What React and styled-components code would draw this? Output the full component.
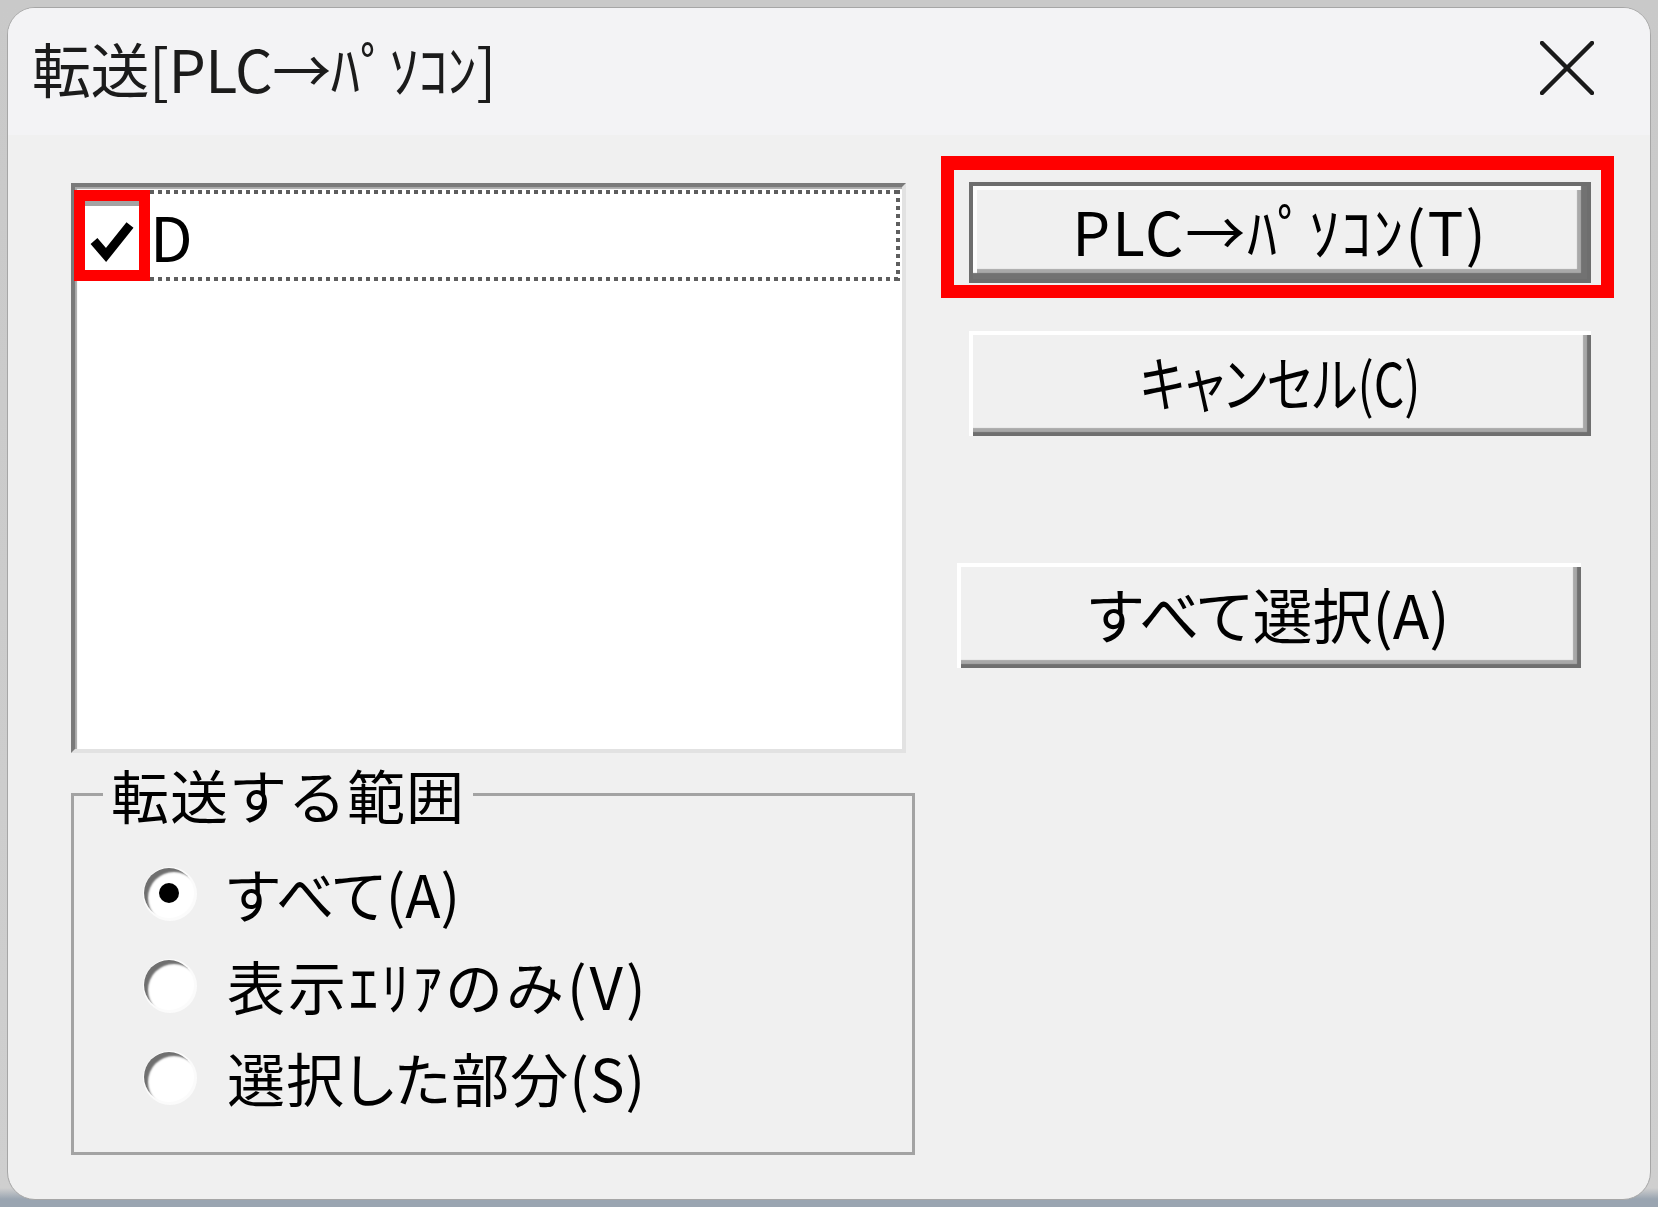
import React from 'react';
import styled, { createGlobalStyle } from 'styled-components';

const UI_FONT = '"Noto Sans CJK JP", "Noto Sans", sans-serif';

const GlobalStyle = createGlobalStyle`
  html, body {
    margin: 0;
    padding: 0;
  }
  body {
    width: 1658px;
    height: 1207px;
    overflow: hidden;
    background: linear-gradient(to bottom, #c9c9c9 0, #cfcfcf 1188px, #9aa5b1 1199px);
    font-family: ${UI_FONT};
  }
`;

const Window = styled.div`
  box-sizing: border-box;
  margin: 7px 0 0 7px;
  width: 1644px;
  height: 1193px;
  border: 1px solid #a6a6a6;
  border-radius: 28px;
  overflow: hidden;
  background: #f0f0f0;
  display: flex;
  flex-direction: column;
`;

const TitleBar = styled.div`
  box-sizing: border-box;
  flex: none;
  height: 127px;
  display: flex;
  align-items: center;
  justify-content: space-between;
  padding: 0 56px 8px 24px;
  background: #f3f3f5;
`;

const Title = styled.div`
  font-size: 59px;
  line-height: 1;
  color: #1b1b1b;
  letter-spacing: -0.5px;
`;

const CloseIcon = () => (
  <svg width="54" height="54" viewBox="0 0 54 54">
    <g stroke="#1a1a1a" strokeWidth="4.5" strokeLinecap="round">
      <line x1="2" y1="2" x2="52" y2="52" />
      <line x1="52" y1="2" x2="2" y2="52" />
    </g>
  </svg>
);

const Content = styled.div`
  flex: 1;
  display: flex;
  align-items: flex-start;
  padding: 21px 0 0 63px;
`;

const LeftColumn = styled.div`
  width: 844px;
  display: flex;
  flex-direction: column;
`;

const ListBox = styled.div`
  box-sizing: border-box;
  margin-top: 27px;
  width: 835px;
  height: 570px;
  background: #fff;
  border-style: solid;
  border-width: 4px;
  border-color: #7a7a7a #e2e2e2 #e2e2e2 #7a7a7a;
  box-shadow: inset 2px 2px 1px #a8a8a8;
  padding: 3px 2px 0 0;
`;

const ItemRow = styled.div`
  display: flex;
  height: 91px;
  margin-left: -1px;
`;

const CheckFrame = styled.div`
  box-sizing: border-box;
  flex: none;
  width: 76px;
  border: 11px solid #ff0000;
  background: #fff;
  display: flex;
`;

const CheckBox = styled.div`
  flex: 1;
  border-top: 5px solid #a3a3a3;
  display: flex;
  align-items: center;
  padding-left: 4px;
  padding-top: 4px;
`;

const CheckMark = () => (
  <svg width="46" height="46" viewBox="0 0 46 46">
    <polyline
      points="5,24 17,38 41,8"
      fill="none"
      stroke="#000"
      strokeWidth="9"
      strokeLinejoin="miter"
    />
  </svg>
);

const dots = '#5e5e5e 0 4px, transparent 4px 8px';

const ItemLabel = styled.div`
  flex: 1;
  display: flex;
  align-items: center;
  font-size: 62px;
  line-height: 1;
  color: #000;
  padding-bottom: 2px;
  background:
    repeating-linear-gradient(90deg, ${dots}) top left / 100% 4px no-repeat,
    repeating-linear-gradient(90deg, ${dots}) bottom left / 100% 4px no-repeat,
    repeating-linear-gradient(180deg, ${dots}) top right / 4px 100% no-repeat,
    #fff;
`;

const GroupBox = styled.fieldset`
  box-sizing: border-box;
  margin: 9px 0 0 0;
  width: 844px;
  min-width: 0;
  border: 3px solid #a3a3a3;
  padding: 0 0 29px 29px;
`;

const Legend = styled.legend`
  padding: 0 8px;
  font-size: 58px;
  line-height: 64px;
  color: #000;
  letter-spacing: 1px;
`;

const RadioList = styled.div`
  margin: 21px 0 0 41px;
  display: flex;
  flex-direction: column;
`;

const RadioRow = styled.label`
  height: 92px;
  display: flex;
  align-items: center;
  gap: 33px;
  font-size: 58px;
  color: #000;
  font-feature-settings: ${p => (p.$palt ? '"palt"' : 'normal')};
  letter-spacing: ${p => p.$spacing || 0}px;
`;

const RadioCircle = styled.span`
  flex: none;
  width: 50px;
  height: 50px;
  border-radius: 50%;
  background: #fff;
  box-shadow: inset 5px 5px 2px -1px #6f6f6f, 1px 1px 0 2px #fbfbfb;
  display: flex;
  align-items: center;
  justify-content: center;

  &::after {
    content: '';
    width: 20px;
    height: 20px;
    border-radius: 50%;
    background: #000;
    display: ${p => (p.$checked ? 'block' : 'none')};
  }
`;

const RightColumn = styled.div`
  margin-left: 26px;
  display: flex;
  flex-direction: column;
  align-items: flex-start;
`;

const Highlight = styled.div`
  box-sizing: border-box;
  width: 673px;
  height: 142px;
  border: 13px solid #ff0000;
  border-top-width: 14px;
  padding: 12px 10px 2px 15px;
  display: flex;
`;

const Button = styled.button`
  box-sizing: border-box;
  width: ${p => p.$width || 622}px;
  height: ${p => p.$height || 105}px;
  margin: ${p => p.$top || 0}px 0 0 ${p => p.$left || 0}px;
  padding: 0 0 6px 0;
  border: none;
  background: #f0f0f0;
  font-family: ${UI_FONT};
  font-size: 60px;
  line-height: 1;
  color: #000;
  font-feature-settings: "palt";
  letter-spacing: ${p => p.$spacing || 0}px;
  box-shadow: ${p =>
    p.$default
      ? 'inset 0 0 0 4px #6e6e6e, inset -10px -10px 1px #727272, inset 8px 8px 0 #fdfdfd, inset -14px -14px 1px #a9a9a9'
      : 'inset 4px 4px 0 #ffffff, inset -4px -4px 1px #6f6f6f, inset -8px -8px 1px #a8a8a8'};
`;

const ButtonText = styled.span`
  display: inline-block;
  transform: scaleX(${p => p.$scale || 1});
`;

export default function App() {
  return (
    <>
      <GlobalStyle />
      <Window>
        <TitleBar>
          <Title>転送[PLC→ﾊﾟｿｺﾝ]</Title>
          <CloseIcon />
        </TitleBar>
        <Content>
          <LeftColumn>
            <ListBox>
              <ItemRow>
                <CheckFrame>
                  <CheckBox>
                    <CheckMark />
                  </CheckBox>
                </CheckFrame>
                <ItemLabel>D</ItemLabel>
              </ItemRow>
            </ListBox>
            <GroupBox>
              <Legend>転送する範囲</Legend>
              <RadioList>
                <RadioRow $palt>
                  <RadioCircle $checked />
                  すべて(A)
                </RadioRow>
                <RadioRow $spacing={3}>
                  <RadioCircle />
                  表示ｴﾘｱのみ(V)
                </RadioRow>
                <RadioRow $palt $spacing={1}>
                  <RadioCircle />
                  選択した部分(S)
                </RadioRow>
              </RadioList>
            </GroupBox>
          </LeftColumn>
          <RightColumn>
            <Highlight>
              <Button $default $height={101} $spacing={2}>
                <ButtonText>PLC→ﾊﾟｿｺﾝ(T)</ButtonText>
              </Button>
            </Highlight>
            <Button $top={33} $left={28}>
              <ButtonText $scale={0.8}>キャンセル(C)</ButtonText>
            </Button>
            <Button $top={127} $left={16} $width={624}>
              <ButtonText>すべて選択(A)</ButtonText>
            </Button>
          </RightColumn>
        </Content>
      </Window>
    </>
  );
}
